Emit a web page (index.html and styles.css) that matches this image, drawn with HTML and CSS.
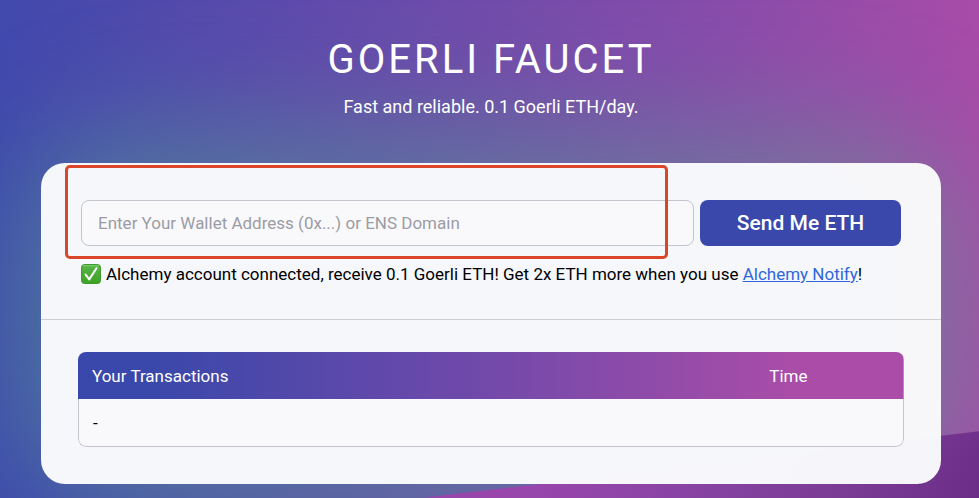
FILE: index.html
```html
<!DOCTYPE html>
<html lang="en">
<head>
<meta charset="utf-8">
<meta name="viewport" content="width=device-width, initial-scale=1">
<title>Goerli Faucet</title>
<link rel="stylesheet" href="styles.css">
</head>
<body>
<header class="hero">
  <h1 class="hero-title">GOERLI FAUCET</h1>
  <p class="hero-text">Fast and reliable. 0.1 Goerli ETH/day.</p>
</header>
<main class="card">
  <section class="request">
    <form class="request-form">
      <input class="address" type="text" aria-label="Wallet address" placeholder="Enter Your Wallet Address (0x...) or ENS Domain">
      <button class="send" type="button">Send Me ETH</button>
    </form>
    <p class="status">
      <svg class="check" viewBox="0 0 20 20" aria-hidden="true">
        <defs><linearGradient id="green" x1="0" y1="0" x2="0" y2="1"><stop offset="0" stop-color="#58b549"/><stop offset="1" stop-color="#3da124"/></linearGradient></defs>
        <rect x=".5" y=".5" width="19" height="19" rx="3" fill="url(#green)" stroke="#3c9a2c"/>
        <path d="M2.5 1.8h15" stroke="#83cf78" stroke-width="1" stroke-linecap="round"/>
        <path d="M4.6 10.6 8.2 15.4 15.5 4.2" fill="none" stroke="#fff" stroke-width="2" stroke-linecap="round" stroke-linejoin="round"/>
      </svg>
      <span>Alchemy account connected, receive 0.1 Goerli ETH! Get 2x ETH more when you use <a class="link" href="#">Alchemy Notify</a>!</span>
    </p>
    <div class="highlight"></div>
  </section>
  <section class="history">
    <table class="transactions">
      <thead><tr><th class="name">Your Transactions</th><th class="time">Time</th></tr></thead>
      <tbody><tr><td>-</td><td></td></tr></tbody>
    </table>
  </section>
</main>
</body>
</html>
```
FILE: styles.css
```css
* { box-sizing: border-box; }

body {
  position: relative;
  min-height: 100vh;
  margin: 0;
  padding: 36px 38px 14px 41px;
  overflow: hidden auto;
  font-family: Roboto, "Liberation Sans", sans-serif;
  font-size: 17px;
  line-height: 24px;
  color: #000;
  background: linear-gradient(84deg, #3f49ad 3%, #6d4cab 48%, #8a4caa 76%, #a84ca8 100%);
}

/* Angled purple band behind the lower corner */
body::before {
  content: "";
  position: absolute;
  inset: 0;
  z-index: -1;
  background: linear-gradient(125deg, #9846ac 66%, #8843a3 78%, #7a3c95 89%, #6a2c87 100%);
  clip-path: polygon(43% 100%, 56% 97%, 100% 86.6%, 100% 100%);
}

/* Soft teal glow around the card */
body::after {
  content: "";
  position: absolute;
  inset: 25% 1% -4%;
  z-index: -2;
  border-radius: 130px;
  background: linear-gradient(90deg, rgba(78, 130, 155, .75), rgba(95, 126, 154, .75) 50%, rgba(120, 125, 155, .75));
  filter: blur(54px);
}

.hero {
  color: #fff;
  text-align: center;
}

.hero-title {
  margin: 0;
  font-size: 40px;
  font-weight: 400;
  line-height: 48px;
  letter-spacing: 3px;
}

.hero-text {
  margin: 11px 0 44px;
  font-size: 18px;
}

.card {
  border-radius: 24px;
  background: rgba(249, 250, 252, .98);
}

.request {
  position: relative;
  padding: 37px 40px 33px;
  border-bottom: 1px solid #cdcfd5;
}

.request-form {
  display: flex;
  gap: 6px;
}

.address {
  flex: 1;
  min-width: 0;
  height: 46px;
  padding: 0 16px;
  border: 1px solid #c3c5cd;
  border-radius: 8px;
  background: #f9f9fc;
  font: inherit;
}

.address::placeholder { color: #9b9ca4; opacity: 1; }

.send {
  width: 201px;
  height: 46px;
  border: 0;
  border-radius: 8px;
  background: #3948aa;
  color: #fff;
  font: inherit;
  font-size: 21px;
  font-weight: 500;
}

.status {
  display: flex;
  align-items: center;
  gap: 5px;
  margin: 16px 0 0;
}

.check {
  flex: none;
  width: 20px;
  height: 20px;
}

.link { color: #2f66dc; }

.highlight {
  position: absolute;
  inset: 2px 273px 60px 24px;
  border: 3px solid #db4529;
  border-radius: 5px;
  pointer-events: none;
}

.history { padding: 32px 37px 37px; }

.transactions {
  width: 100%;
  border-radius: 8px;
  border-spacing: 0;
  overflow: hidden;
  background: #f9f9fb;
}

.transactions thead tr { background: linear-gradient(90deg, #3948aa 8%, #7049aa 48%, #ab4da8 88%); }

.transactions th,
.transactions td {
  height: 47px;
  padding: 0 14px;
  font-weight: 400;
  text-align: left;
}

.transactions th { color: #fff; }
.transactions .time { width: 18%; }

.transactions td {
  height: 48px;
  border-bottom: 1px solid #c3c5cd;
}

.transactions td:first-child {
  border-left: 1px solid #c3c5cd;
  border-bottom-left-radius: 8px;
}

.transactions td:last-child {
  border-right: 1px solid #c3c5cd;
  border-bottom-right-radius: 8px;
}
```
